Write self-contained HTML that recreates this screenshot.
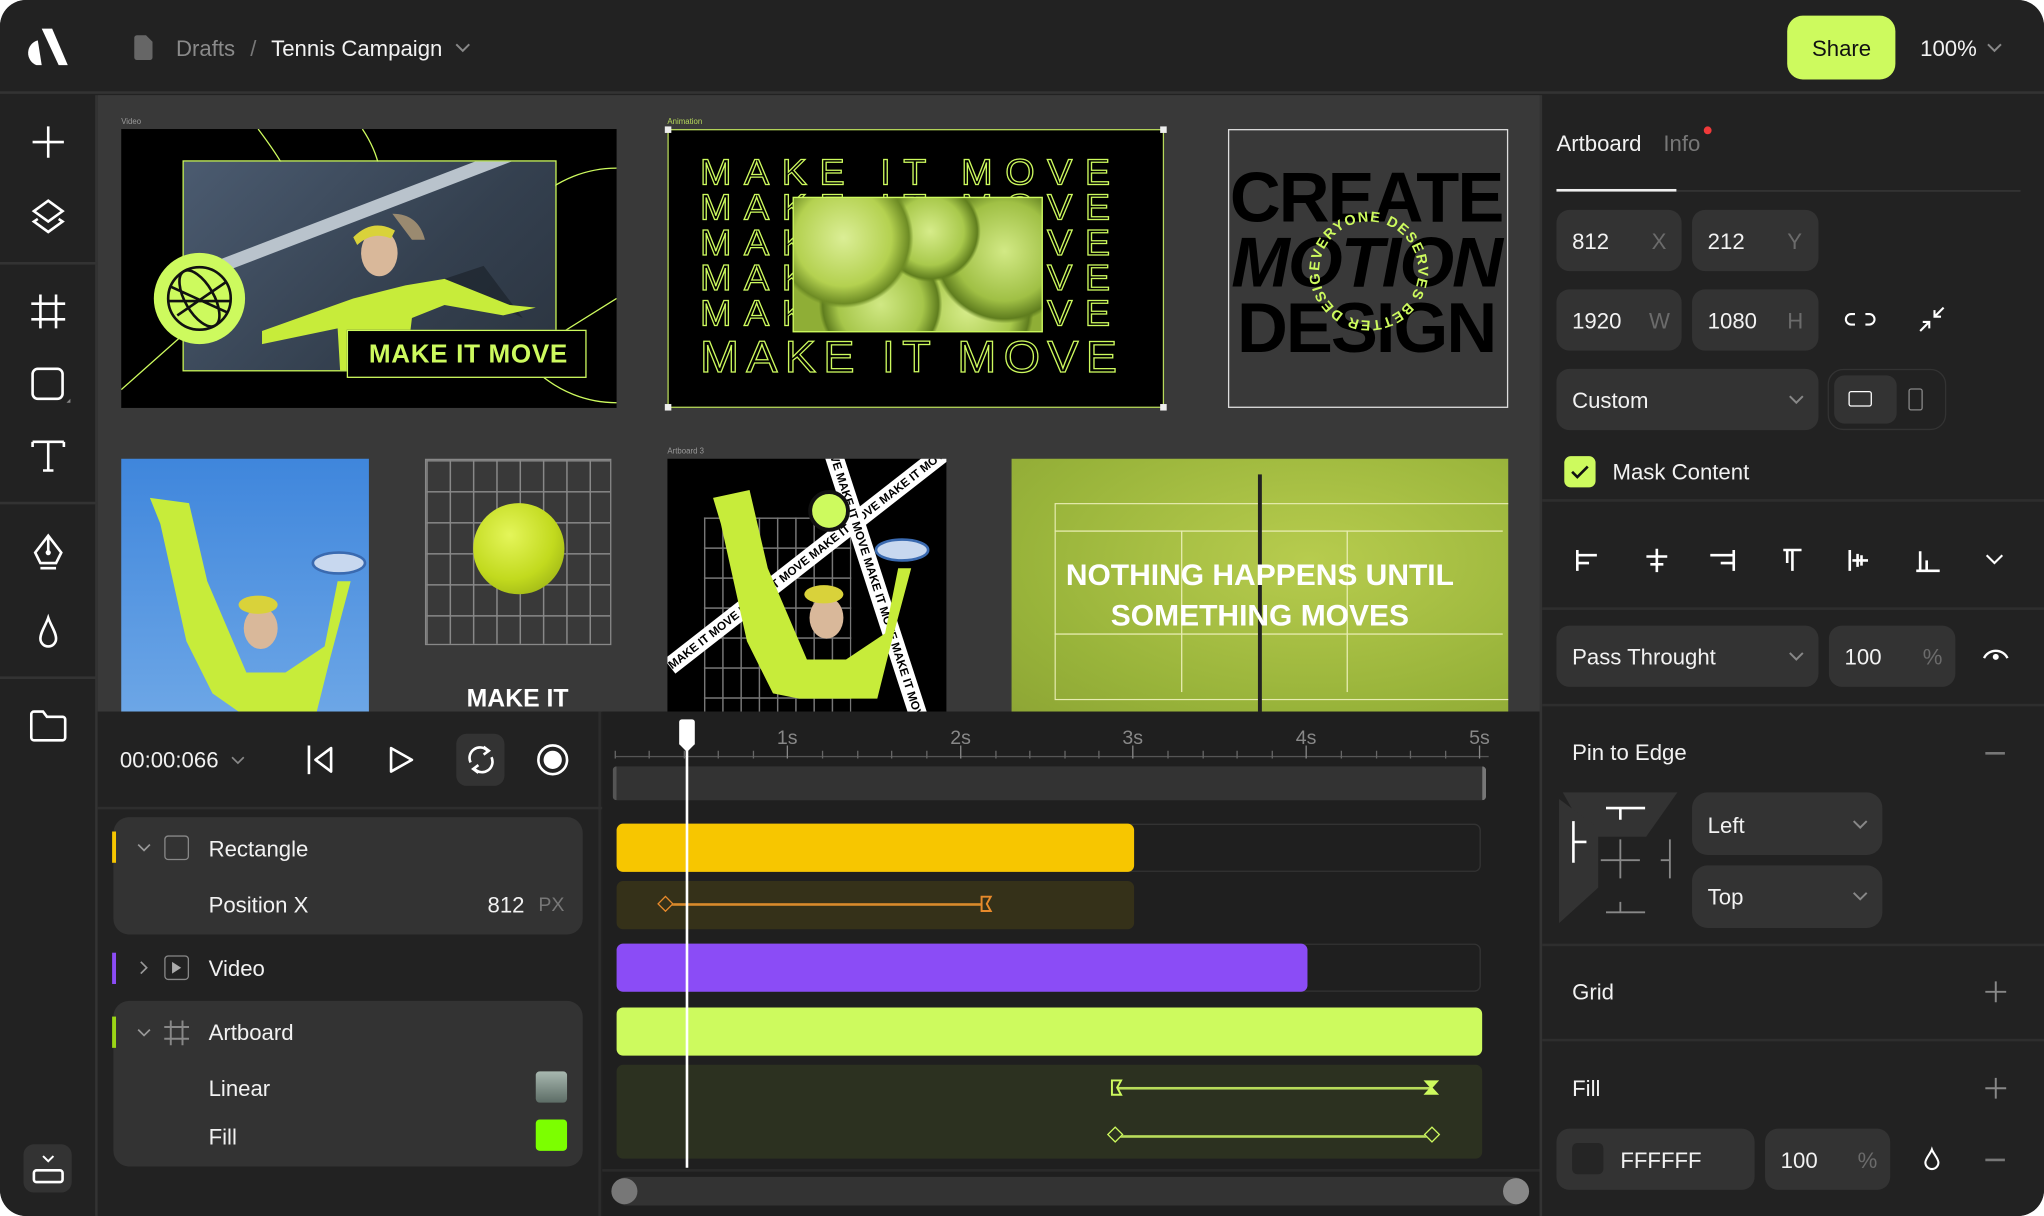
<!DOCTYPE html>
<html><head><meta charset="utf-8">
<style>
*{box-sizing:border-box;margin:0;padding:0}
html,body{width:2044px;height:1216px;overflow:hidden;background:#fff}
#app{position:absolute;left:0;top:0;width:1568px;height:933px;transform:scale(1.30357,1.3033);transform-origin:0 0;background:#222;border-radius:20px;overflow:hidden;font-family:"Liberation Sans",sans-serif;color:#f2f2f2}
.a{position:absolute}
.t{position:absolute;font-size:17px;white-space:nowrap;line-height:1}
.box{position:absolute;background:#333;border-radius:10px}
.lbl{color:#6b6b6b}
svg.i{position:absolute;overflow:visible}
.hr{position:absolute;height:2px;background:#2e2e2e}
.sm{position:absolute;font-size:6px;color:#999}
.mk{position:absolute;left:24px;font-size:29px;line-height:1;letter-spacing:9.6px;color:transparent;-webkit-text-stroke:1px #cdfa5e;white-space:nowrap;transform:scaleY(0.95)}
</style></head><body>
<div id="app">
<!-- top bar -->
<div class="a" style="left:0;top:0;width:1568px;height:72px;background:#222;border-bottom:2px solid #333"></div>
<svg class="i" style="left:20px;top:22px" width="32" height="28" viewBox="0 0 32 28"><path d="M12 0h8l12 28h-7z" fill="#fff"/><path d="M9 9 A10 10 0 0 0 8 28 h4z" fill="#fff"/></svg>
<svg class="i" style="left:103px;top:27px" width="14" height="19" viewBox="0 0 14 19"><path d="M2 0h7l5 5v12a2 2 0 0 1-2 2H2a2 2 0 0 1-2-2V2a2 2 0 0 1 2-2z" fill="#666"/></svg>
<div class="t" style="left:135px;top:29px;color:#8a8a8a">Drafts</div>
<div class="t" style="left:192px;top:29px;color:#777">/</div>
<div class="t" style="left:208px;top:29px">Tennis Campaign</div>
<svg class="i" style="left:349px;top:33px" width="12" height="8"><path d="M1 1l5 5 5-5" stroke="#888" stroke-width="1.5" fill="none"/></svg>
<div class="a" style="left:1371px;top:12px;width:83px;height:49px;background:#cdfa5e;border-radius:12px"></div>
<div class="t" style="left:1390px;top:29px;color:#111;font-weight:500">Share</div>
<div class="t" style="left:1473px;top:29px">100%</div>
<svg class="i" style="left:1524px;top:33px" width="12" height="8"><path d="M1 1l5 5 5-5" stroke="#888" stroke-width="1.5" fill="none"/></svg>

<!-- left toolbar -->
<div class="a" style="left:0;top:73px;width:75px;height:860px;background:#222;border-right:2px solid #333"></div>
<div class="hr" style="left:0;top:201px;width:74px;background:#333"></div>
<div class="hr" style="left:0;top:385px;width:74px;background:#333"></div>
<div class="hr" style="left:0;top:519px;width:74px;background:#333"></div>
<svg class="i" style="left:25px;top:97px" width="24" height="24"><path d="M12 0v24M0 12h24" stroke="#fff" stroke-width="2"/></svg>
<svg class="i" style="left:23px;top:152px" width="28" height="28" viewBox="0 0 28 28"><path d="M14 2l11 8-11 8-11-8z" stroke="#fff" stroke-width="2" fill="none"/><path d="M6 16l-3 2 11 8 11-8-3-2" stroke="#fff" stroke-width="2" fill="none"/></svg>
<svg class="i" style="left:24px;top:226px" width="26" height="26"><path d="M7 0v26M19 0v26M0 7h26M0 19h26" stroke="#fff" stroke-width="2"/></svg>
<svg class="i" style="left:24px;top:282px" width="30" height="30"><rect x="1" y="1" width="23" height="23" rx="4" stroke="#fff" stroke-width="2" fill="none"/><path d="M27 27l3 0 0-3z" fill="#888"/></svg>
<svg class="i" style="left:25px;top:338px" width="24" height="24"><path d="M0 1h24M12 1v22M0 1v4M24 1v4M8 23h8" stroke="#fff" stroke-width="2" fill="none"/></svg>
<svg class="i" style="left:25px;top:410px" width="24" height="28" viewBox="0 0 24 28"><path d="M12 1L2 14l4 8h12l4-8z" stroke="#fff" stroke-width="2" fill="none"/><path d="M12 1v12M6 26h12" stroke="#fff" stroke-width="2"/><circle cx="12" cy="14" r="2" fill="#fff"/></svg>
<svg class="i" style="left:29px;top:473px" width="16" height="26" viewBox="0 0 16 26"><path d="M8 1C6 7 2 12 2 17a6 6 0 0 0 12 0c0-5-4-10-6-16z" stroke="#fff" stroke-width="2" fill="none"/></svg>
<svg class="i" style="left:23px;top:545px" width="28" height="24"><path d="M1 3a2 2 0 0 1 2-2h7l3 4h12a2 2 0 0 1 2 2v14a2 2 0 0 1-2 2H3a2 2 0 0 1-2-2z" stroke="#fff" stroke-width="2" fill="none"/></svg>
<div class="a" style="left:18px;top:878px;width:37px;height:37px;background:#333;border-radius:8px"></div>
<svg class="i" style="left:25px;top:885px" width="24" height="24"><path d="M8 2l4 4 4-4" stroke="#fff" stroke-width="1.5" fill="none"/><rect x="1" y="13" width="22" height="9" rx="2" stroke="#fff" stroke-width="2" fill="none"/></svg>

<!-- canvas -->
<div class="a" style="left:75px;top:73px;width:1106px;height:473px;background:#393939"></div>
<div class="sm" style="left:93px;top:91px">Video</div>
<div class="sm" style="left:512px;top:91px;color:#b6d85a">Animation</div>
<div class="sm" style="left:512px;top:344px">Artboard 3</div>

<!-- artboard A -->
<div class="a" style="left:93px;top:99px;width:380px;height:214px;background:#000;overflow:hidden">
 <svg class="i" style="left:0;top:0" width="380" height="214"><path d="M105 0q15 20 20 30M185 0q10 15 13 30" stroke="#cdfa5e" stroke-width="1" fill="none"/><path d="M380 30a90 90 0 0 0 0 180" stroke="#cdfa5e" stroke-width="1" fill="none"/><path d="M0 200L90 120M300 180l80-50" stroke="#cdfa5e" stroke-width="1"/></svg>
 <div class="a" style="left:47px;top:24px;width:287px;height:162px;background:linear-gradient(135deg,#4b5b70,#34404f 60%,#2b3440);border:1px solid #cdfa5e;overflow:hidden">
  <div class="a" style="left:-20px;top:40px;width:280px;height:10px;background:#b9c3cc;transform:rotate(-21deg)"></div>
  <svg class="i" style="left:0;top:0" width="287" height="162"><path d="M230 80l30 40-60-30z" fill="#1d242c" opacity=".7"/><path d="M60 130L130 105 170 95 200 90 250 110 270 112 245 118 200 110 175 120 170 162 120 162 118 128 60 140z" fill="#c7ec3a"/><ellipse cx="150" cy="70" rx="14" ry="18" fill="#d9b89a"/><path d="M130 58q15-15 32-5l-3 6q-14-6-26 5z" fill="#d9d23a"/><path d="M160 40q20 0 25 20l-10 0z" fill="#9a8a70"/></svg>
 </div>
 <div class="a" style="left:25px;top:95px;width:70px;height:70px;border-radius:50%;background:#cdfa5e"></div>
 <svg class="i" style="left:33px;top:103px" width="54" height="54" viewBox="0 0 54 54"><circle cx="27" cy="27" r="24" stroke="#111" stroke-width="2" fill="none"/><ellipse cx="27" cy="27" rx="11" ry="24" transform="rotate(-30 27 27)" stroke="#111" stroke-width="2" fill="none"/><path d="M5 18l44 20M10 40l38-26M3 29h48" stroke="#111" stroke-width="2"/></svg>
 <div class="a" style="left:173px;top:154px;width:184px;height:37px;background:#000;border:1px solid #cdfa5e"></div>
 <div class="t" style="left:190px;top:163px;font-size:20px;font-weight:700;color:#cdfa5e;letter-spacing:0.5px">MAKE IT MOVE</div>
</div>

<!-- artboard B -->
<div class="a" style="left:512px;top:99px;width:381px;height:214px;background:#000;border:1px solid #b6d85a;overflow:hidden">
 <div class="mk" style="top:19px">MAKE IT MOVE</div>
 <div class="mk" style="top:46px">MAKE IT MOVE</div>
 <div class="mk" style="top:73px">MAKE IT MOVE</div>
 <div class="mk" style="top:100px">MAKE IT MOVE</div>
 <div class="mk" style="top:127px">MAKE IT MOVE</div>
 <div class="mk" style="top:156px;font-size:36px;letter-spacing:5.5px">MAKE IT MOVE</div>
 <div class="a" style="left:95px;top:51px;width:192px;height:104px;background:
 radial-gradient(circle at 20% 30%,#dbee96 0,#b4d150 22%,#6d8b24 30%,transparent 32%),
 radial-gradient(circle at 55% 25%,#d6ec8a 0,#a9c94c 20%,#607e1e 28%,transparent 30%),
 radial-gradient(circle at 85% 40%,#d2e985 0,#a0c045 22%,#5f7d1e 30%,transparent 32%),
 radial-gradient(circle at 35% 80%,#d0e884 0,#a6c64a 22%,#5f7d1e 30%,transparent 32%),
 radial-gradient(circle at 70% 85%,#d6ec8a 0,#a9c94c 22%,#5f7d1e 30%,transparent 32%),#8fae36;border:1px solid #cdfa5e"></div>
</div>
<div class="a" style="left:510px;top:97px;width:5px;height:5px;background:#eee"></div>
<div class="a" style="left:890px;top:97px;width:5px;height:5px;background:#eee"></div>
<div class="a" style="left:510px;top:310px;width:5px;height:5px;background:#eee"></div>
<div class="a" style="left:890px;top:310px;width:5px;height:5px;background:#eee"></div>

<!-- artboard C -->
<div class="a" style="left:942px;top:99px;width:215px;height:214px;border:1px solid #ddd"></div>
<div class="a" style="left:928px;top:127px;width:240px;text-align:center;font-weight:900;font-size:54px;line-height:50px;color:#000;letter-spacing:-1.5px;white-space:nowrap">CREATE<br><i>MOTION</i><br>DESIGN</div>
<svg class="i" style="left:1000px;top:158px" width="100" height="100" viewBox="0 0 100 100"><defs><path id="cp" d="M50 50 m-38 0 a38 38 0 1 1 76 0 a38 38 0 1 1 -76 0"/></defs><text font-size="11" font-weight="700" fill="#cdfa5e" font-family="Liberation Sans" letter-spacing="1"><textPath href="#cp">EVERYONE DESERVES BETTER DESIGN ·</textPath></text></svg>

<!-- row 2 -->
<div class="a" style="left:93px;top:352px;width:190px;height:194px;background:linear-gradient(180deg,#3f86dc,#6ca6e6);overflow:hidden">
 <svg class="i" style="left:0;top:0" width="190" height="194"><path d="M22 30l8 20 20 90 20 40 20 14 60 0 10-40 16-60-10 0-10 50-30 20-30 0-30-70-14-60z" fill="#c7ec3a"/><ellipse cx="107" cy="130" rx="13" ry="16" fill="#d9b89a"/><ellipse cx="105" cy="112" rx="15" ry="7" fill="#d9d23a"/><ellipse cx="167" cy="80" rx="20" ry="8" fill="#c8d8ef" stroke="#3a6ab0" stroke-width="2"/></svg>
</div>
<div class="a" style="left:326px;top:352px;width:143px;height:143px;border:1px solid #888;background-image:linear-gradient(#888 1px,transparent 1px),linear-gradient(90deg,#888 1px,transparent 1px);background-size:17.9px 23.8px,17.9px 23.8px"></div>
<div class="a" style="left:363px;top:386px;width:70px;height:70px;border-radius:50%;background:radial-gradient(circle at 40% 35%,#e4f55a,#c2da1e 55%,#8aa012)"></div>
<div class="t" style="left:358px;top:527px;font-size:19px;font-weight:700;color:#fff">MAKE IT</div>
<div class="a" style="left:512px;top:352px;width:214px;height:194px;background:#000;overflow:hidden">
 <div class="a" style="left:28px;top:45px;width:113px;height:155px;background-image:linear-gradient(#777 1px,transparent 1px),linear-gradient(90deg,#777 1px,transparent 1px);background-size:14px 23px"></div>
 <div class="a" style="left:-30px;top:60px;width:300px;height:14px;background:#fff;transform:rotate(-38deg);font-size:9px;font-weight:700;color:#000;line-height:14px;white-space:nowrap">MAKE IT MOVE MAKE IT MOVE MAKE IT MOVE MAKE IT MOVE</div>
 <div class="a" style="left:30px;top:90px;width:260px;height:14px;background:#fff;transform:rotate(72deg);font-size:9px;font-weight:700;color:#000;line-height:14px;white-space:nowrap">IT MOVE MAKE IT MOVE MAKE IT MOVE MAKE IT MOVE</div>
 <div class="a" style="left:108px;top:24px;width:32px;height:32px;border-radius:50%;background:#cdfa5e;border:3px solid #111"></div>
 <svg class="i" style="left:0;top:0" width="214" height="194"><path d="M35 30l6 20 20 90 20 40 20 4 60 0 10-40 16-60-10 0-10 50-30 20-30 0-30-70-14-60z" fill="#c7ec3a"/><ellipse cx="122" cy="122" rx="13" ry="16" fill="#d9b89a"/><ellipse cx="120" cy="104" rx="15" ry="7" fill="#d9d23a"/><ellipse cx="180" cy="70" rx="20" ry="8" fill="#c8d8ef" stroke="#3a6ab0" stroke-width="2"/></svg>
</div>
<div class="a" style="left:776px;top:352px;width:381px;height:194px;background:radial-gradient(ellipse at 60% 40%,#b7cc4e,#98b33a 70%,#8ea635);overflow:hidden">
 <div class="a" style="left:33px;top:34px;width:424px;height:168px;border:1px solid #e7ecb0;transform:scale(.9);transform-origin:0 0"></div>
 <div class="a" style="left:33px;top:55px;width:382px;height:1px;background:#e7ecb0;transform:scaleX(.9);transform-origin:0 0"></div>
 <div class="a" style="left:33px;top:134px;width:382px;height:1px;background:#e7ecb0;transform:scaleX(.9);transform-origin:0 0"></div>
 <div class="a" style="left:130px;top:55px;width:1px;height:124px;background:#e7ecb0"></div>
 <div class="a" style="left:257px;top:55px;width:1px;height:124px;background:#e7ecb0"></div>
 <div class="a" style="left:189px;top:12px;width:3px;height:182px;background:#222"></div>
 <div class="a" style="left:0;top:74px;width:381px;text-align:center;font-size:23px;line-height:31px;font-weight:700;color:#fff">NOTHING HAPPENS UNTIL<br>SOMETHING MOVES</div>
</div>

<!-- timeline left panel -->
<div class="a" style="left:75px;top:546px;width:386px;height:387px;background:#222;border-right:2px solid #2c2c2c"></div>
<div class="hr" style="left:75px;top:619px;width:1106px;background:#2e2e2e"></div>
<div class="t" style="left:92px;top:575px">00:00:066</div>
<svg class="i" style="left:177px;top:580px" width="11" height="7"><path d="M1 1l4.5 4.5 4.5-4.5" stroke="#888" stroke-width="1.3" fill="none"/></svg>
<svg class="i" style="left:236px;top:572px" width="20" height="22"><path d="M1 0v22" stroke="#fff" stroke-width="2"/><path d="M18 2L6 11l12 9z" stroke="#fff" stroke-width="2" fill="none" stroke-linejoin="round"/></svg>
<svg class="i" style="left:298px;top:572px" width="20" height="22"><path d="M2 2l16 9-16 9z" stroke="#fff" stroke-width="2" fill="none" stroke-linejoin="round"/></svg>
<div class="a" style="left:350px;top:563px;width:37px;height:40px;background:#333;border-radius:8px"></div>
<svg class="i" style="left:357px;top:572px" width="24" height="22" viewBox="0 0 24 22"><path d="M4 13a8 8 0 0 1 13-9M20 9a8 8 0 0 1-13 9" stroke="#fff" stroke-width="2" fill="none"/><path d="M14 1l4 3-4 3M10 15l-4 3 4 3" stroke="#fff" stroke-width="2" fill="none"/></svg>
<svg class="i" style="left:411px;top:570px" width="26" height="26"><circle cx="13" cy="13" r="11" stroke="#fff" stroke-width="2" fill="none"/><circle cx="13" cy="13" r="7" fill="#fff"/></svg>

<div class="a" style="left:87px;top:627px;width:360px;height:90px;background:#333;border-radius:12px"></div>
<div class="a" style="left:86px;top:638px;width:3px;height:24px;background:#f7c600"></div>
<svg class="i" style="left:105px;top:647px" width="11" height="7"><path d="M1 1l4.5 4.5 4.5-4.5" stroke="#999" stroke-width="1.3" fill="none"/></svg>
<div class="a" style="left:126px;top:641px;width:19px;height:19px;border:1.5px solid #888;border-radius:3px"></div>
<div class="t" style="left:160px;top:643px">Rectangle</div>
<div class="t" style="left:160px;top:686px">Position X</div>
<div class="t" style="left:374px;top:686px">812</div>
<div class="t lbl" style="left:413px;top:687px;font-size:15px;color:#777">PX</div>

<div class="a" style="left:86px;top:731px;width:3px;height:24px;background:#8b4cf6"></div>
<svg class="i" style="left:107px;top:737px" width="7" height="11"><path d="M1 1l4.5 4.5-4.5 4.5" stroke="#999" stroke-width="1.3" fill="none"/></svg>
<div class="a" style="left:126px;top:733px;width:19px;height:19px;border:1.5px solid #888;border-radius:3px"></div>
<svg class="i" style="left:132px;top:738px" width="7" height="9"><path d="M0 0l7 4.5-7 4.5z" fill="#aaa"/></svg>
<div class="t" style="left:160px;top:735px">Video</div>

<div class="a" style="left:87px;top:768px;width:360px;height:127px;background:#333;border-radius:12px"></div>
<div class="a" style="left:86px;top:780px;width:3px;height:24px;background:#9bd616"></div>
<svg class="i" style="left:105px;top:789px" width="11" height="7"><path d="M1 1l4.5 4.5 4.5-4.5" stroke="#999" stroke-width="1.3" fill="none"/></svg>
<svg class="i" style="left:126px;top:783px" width="19" height="19"><path d="M5 0v19M14 0v19M0 5h19M0 14h19" stroke="#888" stroke-width="1.5"/></svg>
<div class="t" style="left:160px;top:784px">Artboard</div>
<div class="t" style="left:160px;top:827px">Linear</div>
<div class="a" style="left:411px;top:822px;width:24px;height:24px;border-radius:3px;background:linear-gradient(#a8b8b0,#5d6d66)"></div>
<div class="t" style="left:160px;top:864px">Fill</div>
<div class="a" style="left:411px;top:859px;width:24px;height:24px;border-radius:3px;background:#7cff00"></div>

<!-- timeline right -->
<div class="a" style="left:462px;top:546px;width:719px;height:387px;background:#1f1f1f"></div>
<div class="a" style="left:472px;top:580px;width:670px;height:1px;background:#555"></div>
<svg class="i" style="left:472px;top:574px" width="672" height="10">
<g stroke="#666" stroke-width="1">
<path d="M0 2v6M26 2v6M53 2v6M79 2v6M106 2v6M159 2v6M186 2v6M212 2v6M239 2v6M292 2v6M318 2v6M345 2v6M371 2v6M424 2v6M451 2v6M477 2v6M504 2v6M557 2v6M584 2v6M610 2v6M637 2v6"/>
<path d="M132 -2v10M265 -2v10M397 -2v10M530 -2v10M663 -2v10" stroke="#888"/></g></svg>
<div class="t" style="left:596px;top:559px;color:#888;font-size:15px">1s</div>
<div class="t" style="left:729px;top:559px;color:#888;font-size:15px">2s</div>
<div class="t" style="left:861px;top:559px;color:#888;font-size:15px">3s</div>
<div class="t" style="left:994px;top:559px;color:#888;font-size:15px">4s</div>
<div class="t" style="left:1127px;top:559px;color:#888;font-size:15px">5s</div>
<div class="a" style="left:470px;top:588px;width:670px;height:26px;background:#333;border-radius:3px;border-left:3px solid #555;border-right:3px solid #777"></div>

<div class="a" style="left:473px;top:632px;width:663px;height:37px;border:1px solid #333;border-radius:5px"></div>
<div class="a" style="left:473px;top:632px;width:397px;height:37px;background:#f7c600;border-radius:5px"></div>
<div class="a" style="left:473px;top:676px;width:397px;height:37px;background:#353119;border-radius:5px"></div>
<div class="a" style="left:511px;top:693px;width:246px;height:1.5px;background:#d98a2b"></div>
<div class="a" style="left:506px;top:689px;width:9px;height:9px;border:1.5px solid #e88a2b;background:#353119;transform:rotate(45deg)"></div>
<svg class="i" style="left:752px;top:687px" width="10" height="13"><path d="M1 1h7l-3 5.5 3 5.5H1z" stroke="#e88a2b" stroke-width="1.5" fill="#353119"/></svg>

<div class="a" style="left:473px;top:724px;width:663px;height:37px;border:1px solid #333;border-radius:5px"></div>
<div class="a" style="left:473px;top:724px;width:530px;height:37px;background:#8b4cf6;border-radius:5px"></div>
<div class="a" style="left:473px;top:773px;width:664px;height:37px;background:#cdfa5e;border-radius:5px"></div>
<div class="a" style="left:473px;top:817px;width:664px;height:72px;background:#2c3120;border-radius:5px"></div>
<div class="a" style="left:857px;top:834px;width:241px;height:1.5px;background:#b8dc5a"></div>
<div class="a" style="left:857px;top:871px;width:241px;height:1.5px;background:#b8dc5a"></div>
<svg class="i" style="left:852px;top:828px" width="10" height="13"><path d="M1 1h7l-3 5.5 3 5.5H1z" stroke="#cdfa5e" stroke-width="1.5" fill="#2c3120"/></svg>
<svg class="i" style="left:1091px;top:828px" width="14" height="13"><path d="M1 1h12l-5 5.5 5 5.5H1l5-5.5z" fill="#cdfa5e"/></svg>
<div class="a" style="left:851px;top:866px;width:9px;height:9px;border:1.5px solid #cdfa5e;background:#2c3120;transform:rotate(45deg)"></div>
<div class="a" style="left:1094px;top:866px;width:9px;height:9px;border:1.5px solid #cdfa5e;background:#2c3120;transform:rotate(45deg)"></div>

<div class="a" style="left:526px;top:560px;width:2px;height:336px;background:#fff"></div>
<svg class="i" style="left:520px;top:552px" width="14" height="26"><path d="M1 2a2 2 0 0 1 2-2h8a2 2 0 0 1 2 2v17l-6 6-6-6z" fill="#fff"/></svg>

<div class="a" style="left:462px;top:897px;width:719px;height:2px;background:#2a2a2a"></div>
<div class="a" style="left:470px;top:903px;width:702px;height:22px;background:#333;border-radius:11px"></div>
<div class="a" style="left:469px;top:904px;width:20px;height:20px;border-radius:50%;background:#777"></div>
<div class="a" style="left:1153px;top:904px;width:20px;height:20px;border-radius:50%;background:#888"></div>

<!-- right panel -->
<div class="a" style="left:1181px;top:73px;width:387px;height:860px;background:#222;border-left:2px solid #333"></div>
<div class="t" style="left:1194px;top:102px">Artboard</div>
<div class="t" style="left:1276px;top:102px;color:#777">Info</div>
<div class="a" style="left:1307px;top:97px;width:6px;height:6px;border-radius:50%;background:#f03a3a"></div>
<div class="a" style="left:1194px;top:146px;width:356px;height:1px;background:#3a3a3a"></div>
<div class="a" style="left:1194px;top:145px;width:92px;height:2px;background:#eee"></div>

<div class="box" style="left:1194px;top:161px;width:96px;height:47px"></div>
<div class="t" style="left:1206px;top:177px">812</div><div class="t lbl" style="left:1267px;top:177px">X</div>
<div class="box" style="left:1298px;top:161px;width:97px;height:47px"></div>
<div class="t" style="left:1310px;top:177px">212</div><div class="t lbl" style="left:1371px;top:177px">Y</div>
<div class="box" style="left:1194px;top:222px;width:96px;height:47px"></div>
<div class="t" style="left:1206px;top:238px">1920</div><div class="t lbl" style="left:1265px;top:238px">W</div>
<div class="box" style="left:1298px;top:222px;width:97px;height:47px"></div>
<div class="t" style="left:1310px;top:238px">1080</div><div class="t lbl" style="left:1371px;top:238px">H</div>
<svg class="i" style="left:1415px;top:239px" width="24" height="12"><path d="M8 2H5a4 4 0 0 0 0 8h3M16 2h3a4 4 0 0 1 0 8h-3" stroke="#fff" stroke-width="1.6" fill="none"/></svg>
<svg class="i" style="left:1471px;top:234px" width="22" height="22"><path d="M20 2l-7 7M13 4v5h5M2 20l7-7M9 18v-5H4" stroke="#fff" stroke-width="1.6" fill="none"/></svg>
<div class="box" style="left:1194px;top:283px;width:201px;height:47px"></div>
<div class="t" style="left:1206px;top:299px">Custom</div>
<svg class="i" style="left:1372px;top:303px" width="12" height="8"><path d="M1 1l5 5 5-5" stroke="#888" stroke-width="1.5" fill="none"/></svg>
<div class="a" style="left:1402px;top:283px;width:91px;height:47px;border:1.5px solid #333;border-radius:12px"></div>
<div class="a" style="left:1407px;top:288px;width:48px;height:37px;background:#333;border-radius:8px"></div>
<div class="a" style="left:1418px;top:300px;width:18px;height:12px;border:1.6px solid #fff;border-radius:2px"></div>
<div class="a" style="left:1464px;top:298px;width:11px;height:17px;border:1.6px solid #888;border-radius:2px"></div>
<div class="a" style="left:1200px;top:350px;width:24px;height:24px;background:#cdfa5e;border-radius:5px"></div>
<svg class="i" style="left:1205px;top:356px" width="14" height="11"><path d="M1 6l4 4 8-8" stroke="#111" stroke-width="2" fill="none"/></svg>
<div class="t" style="left:1237px;top:354px">Mask Content</div>
<div class="a" style="left:1183px;top:383px;width:385px;height:2px;background:#2e2e2e"></div>

<svg class="i" style="left:1208px;top:420px" width="340" height="20">
<g stroke="#fff" stroke-width="2" fill="none">
<path d="M2 2v16M3 6h14M3 12h8"/>
<path d="M63 1v18M55 7h16M58 13h10"/>
<path d="M122 2v16M104 6h18M112 12h10"/>
<path d="M160 2h14M167 3v15M163 3v9"/>
<path d="M211 2v16M213 10h12M213 10M217 5v10M220 6v8" />
<path d="M262 18h18M265 3v14M270 10v7"/>
<path d="M316 6l6 6 6-6" stroke-width="1.6"/>
</g></svg>
<div class="a" style="left:1183px;top:466px;width:385px;height:2px;background:#2e2e2e"></div>

<div class="box" style="left:1194px;top:480px;width:201px;height:47px"></div>
<div class="t" style="left:1206px;top:496px">Pass Throught</div>
<svg class="i" style="left:1372px;top:500px" width="12" height="8"><path d="M1 1l5 5 5-5" stroke="#888" stroke-width="1.5" fill="none"/></svg>
<div class="box" style="left:1403px;top:480px;width:97px;height:47px"></div>
<div class="t" style="left:1415px;top:496px">100</div><div class="t lbl" style="left:1475px;top:496px">%</div>
<svg class="i" style="left:1520px;top:496px" width="22" height="12"><path d="M2 9a10 10 0 0 1 18 0" stroke="#fff" stroke-width="1.8" fill="none"/><circle cx="11" cy="8" r="2.3" fill="#fff"/></svg>
<div class="a" style="left:1183px;top:540px;width:385px;height:2px;background:#2e2e2e"></div>

<div class="t" style="left:1206px;top:569px">Pin to Edge</div>
<div class="a" style="left:1523px;top:577px;width:15px;height:1.5px;background:#777"></div>
<svg class="i" style="left:1194px;top:608px" width="96" height="110">
<path d="M6 0h110l-30 34H30z" fill="#333" transform="translate(0,0) scale(.8 1)"/>
<path d="M2 6l30 26v54L2 118z" fill="#333" transform="scale(1 .85)"/>
<g stroke="#fff" stroke-width="2"><path d="M38 12h30M49 12v9"/><path d="M13 22v32M13 38h10"/></g>
<g stroke="#888" stroke-width="1.4"><path d="M49 36v30M34 52h30M87 36v30M80 52h7M38 92h30M49 84v8"/></g>
</svg>
<div class="box" style="left:1298px;top:608px;width:146px;height:48px;border-radius:12px"></div>
<div class="t" style="left:1310px;top:625px">Left</div>
<svg class="i" style="left:1421px;top:629px" width="12" height="8"><path d="M1 1l5 5 5-5" stroke="#888" stroke-width="1.5" fill="none"/></svg>
<div class="box" style="left:1298px;top:664px;width:146px;height:48px;border-radius:12px"></div>
<div class="t" style="left:1310px;top:680px">Top</div>
<svg class="i" style="left:1421px;top:684px" width="12" height="8"><path d="M1 1l5 5 5-5" stroke="#888" stroke-width="1.5" fill="none"/></svg>
<div class="a" style="left:1183px;top:724px;width:385px;height:2px;background:#2e2e2e"></div>

<div class="t" style="left:1206px;top:753px">Grid</div>
<svg class="i" style="left:1523px;top:753px" width="16" height="16"><path d="M8 0v16M0 8h16" stroke="#888" stroke-width="1.5"/></svg>
<div class="a" style="left:1183px;top:797px;width:385px;height:2px;background:#2e2e2e"></div>
<div class="t" style="left:1206px;top:827px">Fill</div>
<svg class="i" style="left:1523px;top:827px" width="16" height="16"><path d="M8 0v16M0 8h16" stroke="#888" stroke-width="1.5"/></svg>
<div class="box" style="left:1194px;top:866px;width:152px;height:47px"></div>
<div class="a" style="left:1206px;top:877px;width:24px;height:24px;background:#252525;border-radius:4px"></div>
<div class="t" style="left:1243px;top:882px">FFFFFF</div>
<div class="box" style="left:1354px;top:866px;width:96px;height:47px"></div>
<div class="t" style="left:1366px;top:882px">100</div><div class="t lbl" style="left:1425px;top:882px">%</div>
<svg class="i" style="left:1476px;top:881px" width="12" height="17"><path d="M6 1C5 4 1 8 1 11a5 5 0 0 0 10 0c0-3-4-7-5-10z" stroke="#fff" stroke-width="1.6" fill="none"/></svg>
<div class="a" style="left:1523px;top:889px;width:15px;height:1.5px;background:#777"></div>
</div>
</body></html>
